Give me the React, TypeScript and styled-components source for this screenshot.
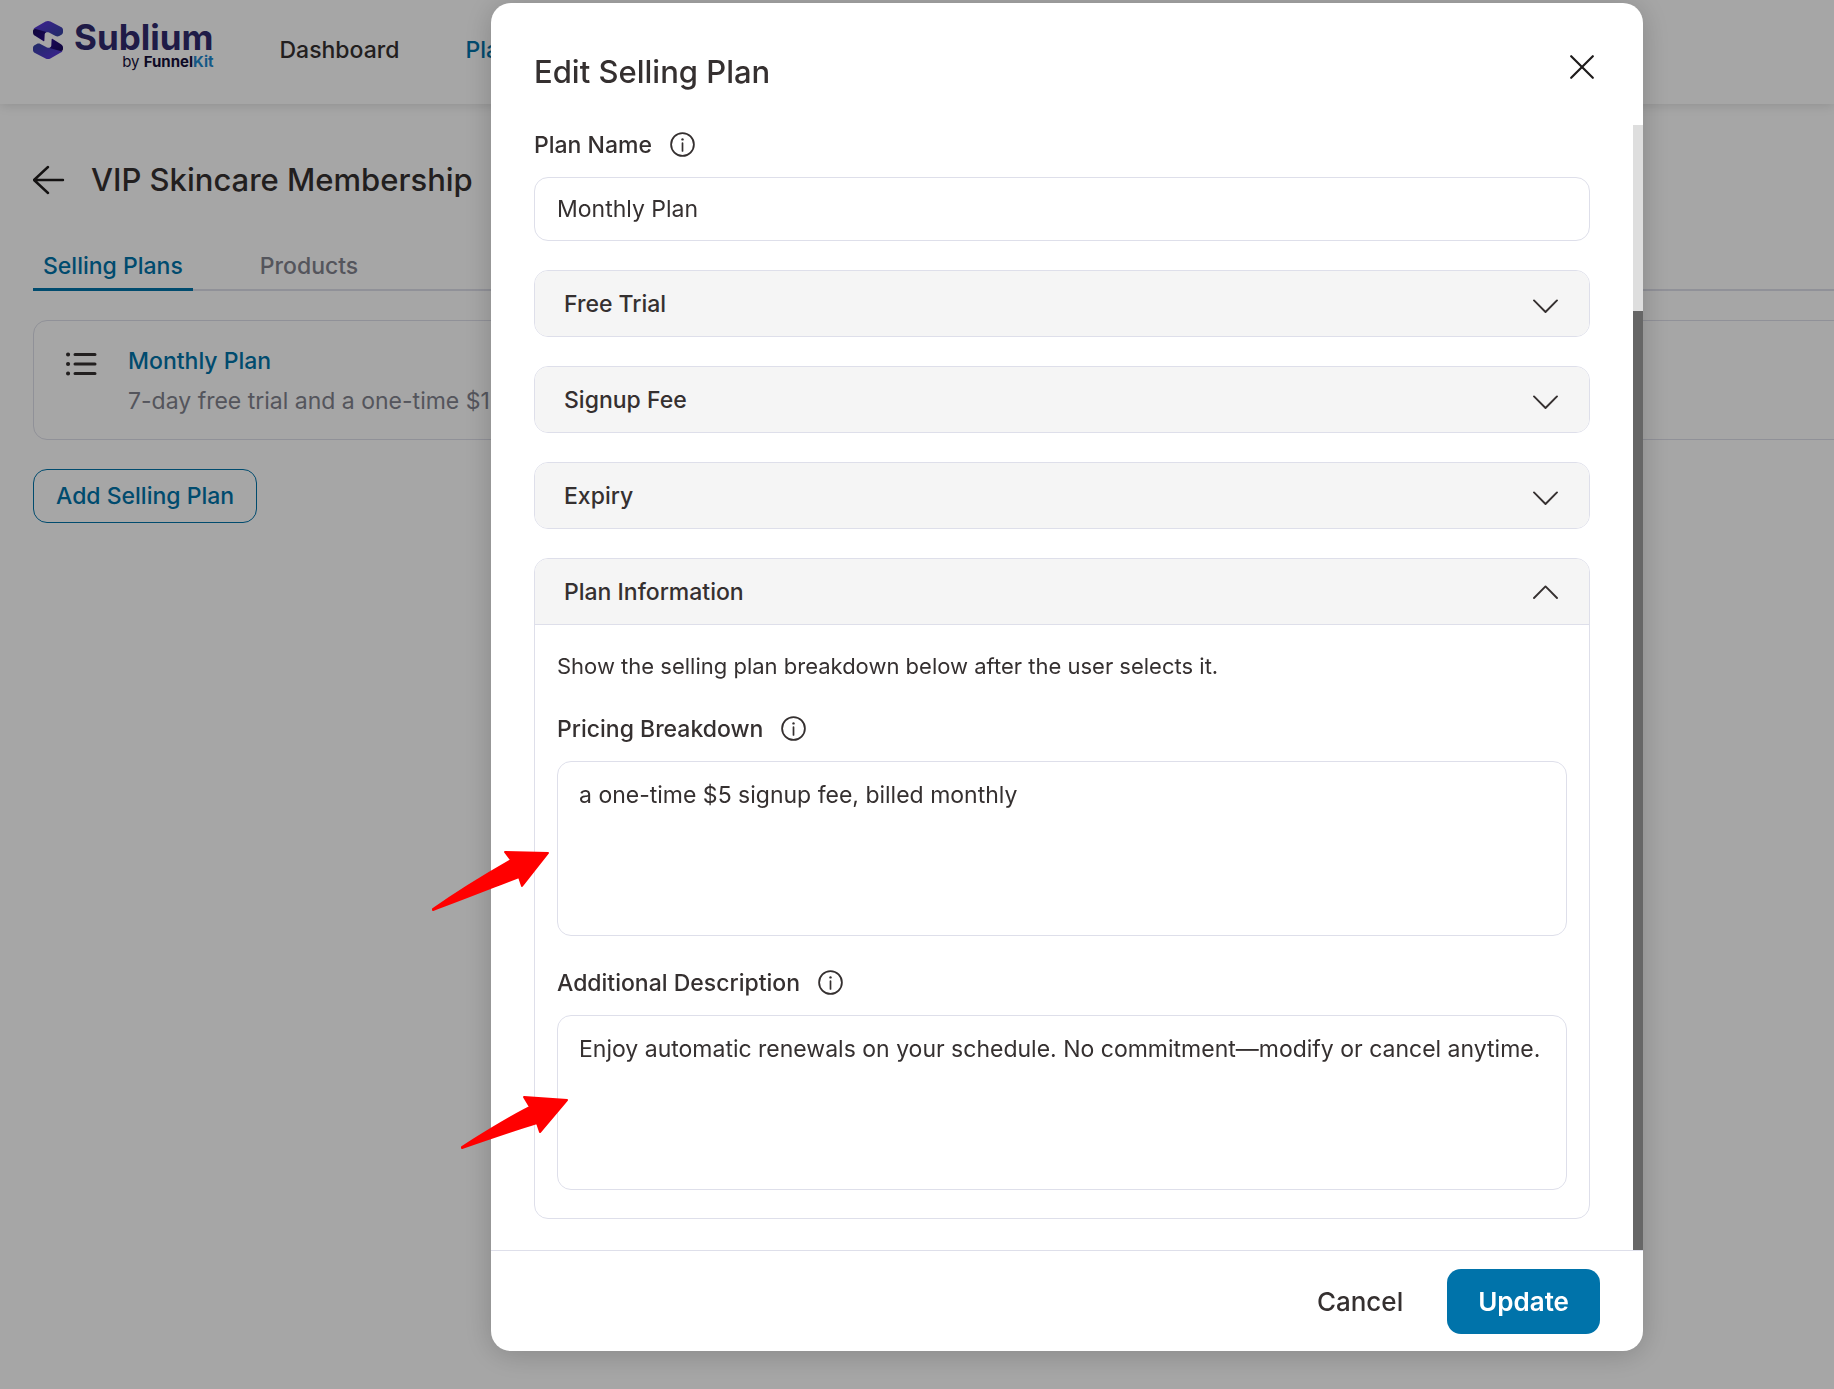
import React, { useState } from 'react';
import styled, { createGlobalStyle } from 'styled-components';

const color = {
  ink: '#353030',
  muted: '#82838e',
  accent: '#0073aa',
  line: '#dedfea',
  panel: '#f5f5f5',
};

const GlobalStyle = createGlobalStyle`
  *, *::before, *::after { box-sizing: border-box; }
  body {
    margin: 0;
    background: #fff;
    color: ${color.ink};
    font-family: Inter, "Liberation Sans", sans-serif;
    font-size: 23px;
    line-height: 32px;
  }
  button, input, textarea { font: inherit; color: inherit; }
  h1, h2, h3, p, ul { margin: 0; padding: 0; }
  svg { display: block; flex: none; }
`;

const Shell = styled.div`
  min-height: 100vh;
  overflow: hidden;
`;

const TopBar = styled.header`
  display: flex;
  align-items: flex-start;
  gap: 66px;
  height: 104px;
  padding: 21px 33px 0;
  background: #fff;
  box-shadow: 0 2px 10px rgba(0, 0, 0, 0.12);
`;

const Brand = styled.a`
  display: flex;
  align-items: flex-start;
  gap: 11px;
  text-decoration: none;
`;

const Wordmark = styled.span`
  display: flex;
  flex-direction: column;
  align-items: flex-end;
`;

const BrandName = styled.span`
  color: #302a6d;
  font-size: 35px;
  font-weight: 700;
  line-height: 32px;
`;

const BrandBy = styled.span`
  color: #15103a;
  font-size: 15px;
  line-height: 18px;
  white-space: pre;
  b { font-weight: 700; }
  i { color: #2189cf; font-style: normal; }
`;

const Nav = styled.nav`
  display: flex;
  gap: 66px;
  padding-top: 13px;
`;

const NavLink = styled.a<{ $active?: boolean }>`
  color: ${(p) => (p.$active ? color.accent : color.ink)};
  font-weight: 500;
  text-decoration: none;
`;

const Page = styled.main`
  display: flex;
  flex-direction: column;
  padding: 56px 0 0 33px;
`;

const TitleRow = styled.div`
  display: flex;
  align-items: center;
  gap: 26px;
`;

const IconButton = styled.button`
  display: flex;
  padding: 0;
  border: 0;
  background: none;
  cursor: pointer;
`;

const Title = styled.h1`
  font-size: 31px;
  font-weight: 500;
  line-height: 40px;
`;

const Tabs = styled.div`
  display: flex;
  gap: 57px;
  margin-top: 50px;
  box-shadow: inset 0 -2px 0 ${color.line};
`;

const Tab = styled.button<{ $active?: boolean }>`
  padding: 0 10px 6px;
  border: 0;
  border-bottom: 3px solid ${(p) => (p.$active ? color.accent : 'transparent')};
  background: none;
  color: ${(p) => (p.$active ? color.accent : color.muted)};
  font-weight: 500;
`;

const PlanCard = styled.section`
  display: flex;
  gap: 31px;
  margin: 29px -33px 0 0;
  padding: 24px 32px 22px;
  border: 1px solid ${color.line};
  border-radius: 14px;
  svg { margin-top: 7px; }
`;

const PlanText = styled.div`
  display: flex;
  flex-direction: column;
  gap: 8px;
`;

const PlanLink = styled.a`
  color: ${color.accent};
  font-weight: 500;
  text-decoration: none;
`;

const PlanNote = styled.p`
  color: ${color.muted};
`;

const OutlineButton = styled.button`
  align-self: flex-start;
  height: 54px;
  margin-top: 29px;
  padding: 0 22px;
  border: 1px solid ${color.accent};
  border-radius: 14px;
  background: none;
  color: ${color.accent};
  font-weight: 500;
`;

const Backdrop = styled.div`
  position: fixed;
  inset: 0;
  display: flex;
  align-items: flex-start;
  padding: 3px 191px 38px 491px;
  background: rgba(0, 0, 0, 0.35);
`;

const Dialog = styled.form`
  flex: 1;
  border-radius: 20px;
  background: #fff;
  box-shadow: 0 3px 30px rgba(0, 0, 0, 0.2);
`;

const DialogHead = styled.header`
  display: flex;
  align-items: flex-start;
  justify-content: space-between;
  padding: 49px 49px 33px 43px;
  button { padding: 3px 0; }
`;

const DialogTitle = styled.h2`
  font-size: 31px;
  font-weight: 500;
  line-height: 40px;
`;

const DialogBody = styled.div`
  display: flex;
`;

const Fields = styled.div`
  flex: 1;
  display: flex;
  flex-direction: column;
  gap: 29px;
  padding: 4px 43px 31px;
`;

const ScrollTrack = styled.div`
  display: flex;
  flex-direction: column;
  width: 10px;
  background: #dedede;
`;

const ScrollSpace = styled.div`
  flex: 186;
`;

const ScrollThumb = styled.div`
  flex: 939;
  background: #666;
`;

const Field = styled.div`
  display: flex;
  flex-direction: column;
  gap: 16px;
`;

const LabelRow = styled.div`
  display: flex;
  align-items: center;
  gap: 18px;
  label { font-weight: 500; }
`;

const TextInput = styled.input`
  width: 100%;
  height: 64px;
  padding: 0 22px;
  border: 1px solid ${color.line};
  border-radius: 14px;
  outline: none;
  background: #fff;
`;

const AreaWrap = styled.div`
  position: relative;
  display: flex;
`;

const TextArea = styled.textarea`
  width: 100%;
  height: 175px;
  padding: 17px 21px;
  border: 1px solid ${color.line};
  border-radius: 14px;
  outline: none;
  background: #fff;
  resize: none;
`;

const Pointer = styled.svg<{ $left: number; $top: number }>`
  position: absolute;
  left: ${(p) => p.$left}px;
  top: ${(p) => p.$top}px;
  fill: #f00;
  stroke: #f00;
  stroke-width: 2;
  stroke-linejoin: round;
  pointer-events: none;
`;

const Panel = styled.section`
  border: 1px solid ${color.line};
  border-radius: 14px;
`;

const PanelHead = styled.button<{ $open: boolean }>`
  display: flex;
  align-items: center;
  justify-content: space-between;
  width: 100%;
  height: 65px;
  padding: 0 31px 0 29px;
  border: 0;
  border-radius: ${(p) => (p.$open ? '13px 13px 0 0' : '13px')};
  background: ${color.panel};
  font-weight: 500;
  cursor: pointer;
`;

const PanelBody = styled.div`
  display: flex;
  flex-direction: column;
  gap: 31px;
  padding: 25px 22px 28px;
  border-top: 1px solid ${color.line};
`;

const Hint = styled.p`
  font-size: 22px;
`;

const DialogFoot = styled.footer`
  display: flex;
  align-items: center;
  justify-content: flex-end;
  gap: 44px;
  padding: 18px 43px 17px;
  border-top: 1px solid ${color.line};
`;

const FootButton = styled.button<{ $primary?: boolean }>`
  height: 65px;
  padding: 0 ${(p) => (p.$primary ? 31 : 0)}px;
  border: 0;
  border-radius: 14px;
  background: ${(p) => (p.$primary ? color.accent : 'none')};
  color: ${(p) => (p.$primary ? '#fff' : color.ink)};
  font-size: 26px;
  font-weight: ${(p) => (p.$primary ? 600 : 500)};
`;

function LogoMark() {
  return (
    <svg width="30" height="38" viewBox="0 0 30 38" aria-hidden="true">
      <defs>
        <linearGradient id="ribbon" x1="0" y1="0" x2="1" y2="1">
          <stop offset="0.2" stopColor="#5636d4" />
          <stop offset="1" stopColor="#33459c" />
        </linearGradient>
        <linearGradient id="fold" x1="0" y1="0" x2="1" y2="1">
          <stop offset="0" stopColor="#190a58" />
          <stop offset="1" stopColor="#2a0c8c" />
        </linearGradient>
      </defs>
      {[0, 180].map((turn) => (
        <g key={turn} transform={`rotate(${turn} 15 19)`}>
          <path d="M.6 8C.9 7.3 1.4 6.8 2.2 6.4L12.6.6c1.6-.8 3.2-.8 4.8 0L28 6c1.3.7 2 1.6 2 3v2c0 1.3-.7 2.3-2 3l-1.8 1c-1.2.6-2.4.6-3.6 0L16 11.6c-1-.5-2.2-.6-3.2-.2L11.500 13Z" fill="url(#ribbon)" />
          <path d="M0 10C0 8.600 1 7.700 2.600 8.100L13.500 11.100C12 11.500 11.800 12.300 11.700 13.500L11.400 19.300C11.400 20.200 11 20.400 10.300 20L2 14.800C.7 14 0 13 0 11.500Z" fill="url(#fold)" />
        </g>
      ))}
    </svg>
  );
}

function BackArrow() {
  return (
    <svg width="32" height="30" viewBox="0 0 32 30" fill="none" stroke="#1f1c1c" strokeWidth="2.4" strokeLinecap="round" strokeLinejoin="round" aria-hidden="true">
      <path d="M30 15H1M15 2 1 15l14 13" />
    </svg>
  );
}

function ListIcon() {
  return (
    <svg width="31" height="24" viewBox="0 0 31 24" stroke={color.ink} strokeWidth="3" strokeLinecap="round" aria-hidden="true">
      <path d="M9 2.5h20M9 12h20M9 21.5h20" />
      <path d="M2 2.5h.1M2 12h.1M2 21.5h.1" strokeWidth="4" />
    </svg>
  );
}

function CloseIcon() {
  return (
    <svg width="24" height="24" viewBox="0 0 24 24" stroke="#1f1c1c" strokeWidth="2.2" strokeLinecap="round" aria-hidden="true">
      <path d="M1.2 1.2l21.6 21.6M22.8 1.2 1.2 22.8" />
    </svg>
  );
}

function InfoIcon() {
  return (
    <svg width="25" height="26" viewBox="0 0 25 26" fill="none" stroke={color.ink} aria-hidden="true">
      <circle cx="12.5" cy="12.5" r="11.4" strokeWidth="1.8" />
      <path d="M12.5 11v8" strokeWidth="1.7" strokeLinecap="round" />
      <circle cx="12.5" cy="7.4" r="1.2" fill={color.ink} stroke="none" />
    </svg>
  );
}

function Chevron({ up }: { up: boolean }) {
  return (
    <svg width="25" height="24" viewBox="0 0 25 24" fill="none" stroke={color.ink} strokeWidth="1.9" strokeLinecap="round" strokeLinejoin="round" aria-hidden="true">
      <path d={up ? 'M1 18 12.500 6.400 24 18' : 'M1 8.400 12.500 20 24 8.400'} />
    </svg>
  );
}

function InfoButton({ about }: { about: string }) {
  return (
    <IconButton type="button" aria-label={`About ${about}`}>
      <InfoIcon />
    </IconButton>
  );
}

function Accordion({ title, initiallyOpen = false, children }: { title: string; initiallyOpen?: boolean; children?: React.ReactNode }) {
  const [open, setOpen] = useState(initiallyOpen);
  return (
    <Panel>
      <PanelHead type="button" $open={open && !!children} aria-expanded={open} onClick={() => setOpen(!open)}>
        {title}
        <Chevron up={open} />
      </PanelHead>
      {open && children ? <PanelBody>{children}</PanelBody> : null}
    </Panel>
  );
}

export default function App() {
  return (
    <>
      <GlobalStyle />
      <Shell>
        <TopBar>
          <Brand href="#home">
            <LogoMark />
            <Wordmark>
              <BrandName>Sublium</BrandName>
              <BrandBy>by <b>Funnel<i>Kit</i></b></BrandBy>
            </Wordmark>
          </Brand>
          <Nav>
            <NavLink href="#dashboard">Dashboard</NavLink>
            <NavLink href="#plans" $active>Plans</NavLink>
          </Nav>
        </TopBar>
        <Page>
          <TitleRow>
            <IconButton type="button" aria-label="Back"><BackArrow /></IconButton>
            <Title>VIP Skincare Membership</Title>
          </TitleRow>
          <Tabs role="tablist">
            <Tab type="button" role="tab" aria-selected $active>Selling Plans</Tab>
            <Tab type="button" role="tab" aria-selected={false}>Products</Tab>
          </Tabs>
          <PlanCard>
            <ListIcon />
            <PlanText>
              <PlanLink href="#monthly">Monthly Plan</PlanLink>
              <PlanNote>7-day free trial and a one-time $1</PlanNote>
            </PlanText>
          </PlanCard>
          <OutlineButton type="button">Add Selling Plan</OutlineButton>
        </Page>
      </Shell>
      <Backdrop>
        <Dialog role="dialog" aria-labelledby="dialog-title" onSubmit={(e) => e.preventDefault()}>
          <DialogHead>
            <DialogTitle id="dialog-title">Edit Selling Plan</DialogTitle>
            <IconButton type="button" aria-label="Close"><CloseIcon /></IconButton>
          </DialogHead>
          <DialogBody>
            <Fields>
              <Field>
                <LabelRow>
                  <label htmlFor="plan-name">Plan Name</label>
                  <InfoButton about="Plan Name" />
                </LabelRow>
                <TextInput id="plan-name" type="text" defaultValue="Monthly Plan" />
              </Field>
              <Accordion title="Free Trial" />
              <Accordion title="Signup Fee" />
              <Accordion title="Expiry" />
              <Accordion title="Plan Information" initiallyOpen>
                <Hint>Show the selling plan breakdown below after the user selects it.</Hint>
                <Field>
                  <LabelRow>
                    <label htmlFor="pricing">Pricing Breakdown</label>
                    <InfoButton about="Pricing Breakdown" />
                  </LabelRow>
                  <AreaWrap>
                    <TextArea id="pricing" spellCheck={false} defaultValue="a one-time $5 signup fee, billed monthly" />
                    <Pointer $left={-126} $top={88} width="119" height="64" viewBox="0 0 119 64" aria-hidden="true">
                      <path d="M2 60 C26 43 52 27 80 11 L74 3 L117 4 L91 37 L88 28 C62 38 32 50 2 61Z" />
                    </Pointer>
                  </AreaWrap>
                </Field>
                <Field>
                  <LabelRow>
                    <label htmlFor="description">Additional Description</label>
                    <InfoButton about="Additional Description" />
                  </LabelRow>
                  <AreaWrap>
                    <TextArea id="description" spellCheck={false} defaultValue="Enjoy automatic renewals on your schedule. No commitment—modify or cancel anytime." />
                    <Pointer $left={-97} $top={80} width="109" height="56" viewBox="0 0 109 56" aria-hidden="true">
                      <path d="M2 52 C24 38 46 24 70 12 L64 2 L107 5 L80 37 L77 28 C54 35 28 44 2 53Z" />
                    </Pointer>
                  </AreaWrap>
                </Field>
              </Accordion>
            </Fields>
            <ScrollTrack aria-hidden="true">
              <ScrollSpace />
              <ScrollThumb />
            </ScrollTrack>
          </DialogBody>
          <DialogFoot>
            <FootButton type="button">Cancel</FootButton>
            <FootButton type="submit" $primary>Update</FootButton>
          </DialogFoot>
        </Dialog>
      </Backdrop>
    </>
  );
}
